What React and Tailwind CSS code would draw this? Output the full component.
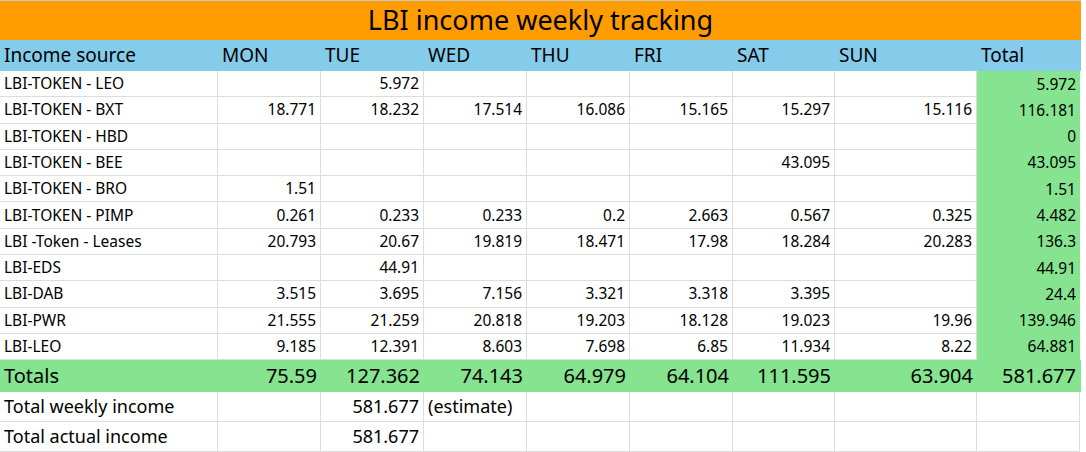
const days = ["MON", "TUE", "WED", "THU", "FRI", "SAT", "SUN"];
const rows = [
  ["LBI-TOKEN - LEO", "", "5.972", "", "", "", "", "", "5.972"],
  ["LBI-TOKEN - BXT", "18.771", "18.232", "17.514", "16.086", "15.165", "15.297", "15.116", "116.181"],
  ["LBI-TOKEN - HBD", "", "", "", "", "", "", "", "0"],
  ["LBI-TOKEN - BEE", "", "", "", "", "", "43.095", "", "43.095"],
  ["LBI-TOKEN - BRO", "1.51", "", "", "", "", "", "", "1.51"],
  ["LBI-TOKEN - PIMP", "0.261", "0.233", "0.233", "0.2", "2.663", "0.567", "0.325", "4.482"],
  ["LBI -Token - Leases", "20.793", "20.67", "19.819", "18.471", "17.98", "18.284", "20.283", "136.3"],
  ["LBI-EDS", "", "44.91", "", "", "", "", "", "44.91"],
  ["LBI-DAB", "3.515", "3.695", "7.156", "3.321", "3.318", "3.395", "", "24.4"],
  ["LBI-PWR", "21.555", "21.259", "20.818", "19.203", "18.128", "19.023", "19.96", "139.946"],
  ["LBI-LEO", "9.185", "12.391", "8.603", "7.698", "6.85", "11.934", "8.22", "64.881"],
];
const totals = ["75.59", "127.362", "74.143", "64.979", "64.104", "111.595", "63.904", "581.677"];

const gridCols = "grid grid-cols-[218px_103px_103px_103px_103px_103px_102px_142px_103px]";
const label = "font-['Inter','Noto_Sans',sans-serif]";
const num = "font-['Liberation_Sans',Arial,sans-serif]";
const cell = "border-r border-b border-[#dcdcdc] flex items-center";

export default function App() {
  return (
    <div className="w-[1086px] h-[452px] overflow-hidden bg-white text-black">
      <div className="w-[1081px] border-t border-[#c8c8c8]">
        <div className={`h-[39px] bg-[#ff9c00] flex items-center justify-center text-[27px] ${label}`}>
          LBI income weekly tracking
        </div>
        <div className={`${gridCols} h-[31px] bg-[#85cbea] text-[19px] ${label}`}>
          <div className="pl-1 flex items-center">Income source</div>
          {days.map(d => <div key={d} className="pl-1 flex items-center">{d}</div>)}
          <div className="pl-1 flex items-center">Total</div>
        </div>
        {rows.map((r, i) => (
          <div key={i} className={`${gridCols} h-[26.3px] text-[15.5px]`}>
            <div className={`${cell} pl-1 ${label}`}>{r[0]}</div>
            {r.slice(1, 8).map((v, j) => (
              <div key={j} className={`${cell} justify-end pr-1 ${num}`}>{v}</div>
            ))}
            <div className={`bg-[#86e38f] flex items-center justify-end pr-1 ${num}`}>{r[8]}</div>
          </div>
        ))}
        <div className={`${gridCols} h-[32px] bg-[#86e38f] text-[20px]`}>
          <div className={`pl-1 flex items-center ${label}`}>Totals</div>
          {totals.map((v, j) => (
            <div key={j} className={`flex items-center justify-end pr-1 ${num}`}>{v}</div>
          ))}
        </div>
        {[["Total weekly income", "(estimate)"], ["Total actual income", ""]].map(([l, e], i) => (
          <div key={i} className={`${gridCols} h-[30px] text-[18px]`}>
            <div className={`${cell} pl-1 ${label}`}>{l}</div>
            <div className={cell}></div>
            <div className={`${cell} justify-end pr-1 ${num}`}>581.677</div>
            <div className={`${cell} pl-1 whitespace-nowrap ${num}`}>{e}</div>
            {[0, 1, 2, 3, 4].map(k => <div key={k} className={cell}></div>)}
          </div>
        ))}
      </div>
    </div>
  );
}
